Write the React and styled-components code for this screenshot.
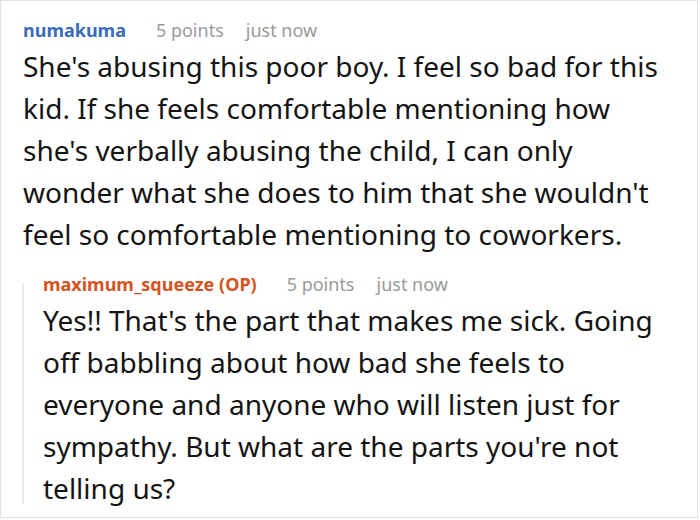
import React from 'react';
import styled, { createGlobalStyle } from 'styled-components';

const GlobalStyle = createGlobalStyle`
  html, body {
    margin: 0;
    padding: 0;
    background: #ffffff;
  }
  * {
    box-sizing: border-box;
  }
`;

const Frame = styled.div`
  width: 698px;
  height: 518px;
  border: 1px solid #e2e2e2;
  background: #fff;
  overflow: hidden;
  padding: 16px 17px 0 22px;
  font-family: "Noto Sans", "Open Sans", sans-serif;
`;

const Comment = styled.div`
  display: flex;
  flex-direction: column;
`;

const Reply = styled.div`
  display: flex;
  margin-top: 16px;
  gap: 19px;
`;

const Rail = styled.div`
  flex: none;
  width: 2px;
  margin: 12px 0 5px -1px;
  background: #ebebeb;
`;

const ReplyContent = styled.div`
  flex: 1;
  min-width: 0;
`;

const Meta = styled.div`
  display: flex;
  align-items: baseline;
  gap: 30px;
  font-size: 18px;
  line-height: 26px;
`;

const Author = styled.span`
  font-weight: 700;
  color: ${p => (p.$op ? '#d6531d' : '#3a6cba')};
`;

const Muted = styled.span`
  color: #9a9a9a;
  margin-left: ${p => (p.$tight ? '-8px' : '0')};
`;

const Body = styled.p`
  margin: 2px 0 0;
  font-size: 28px;
  line-height: 42px;
  color: #141414;
`;

const comments = {
  parent: {
    author: 'numakuma',
    points: '5 points',
    time: 'just now',
    text: "She's abusing this poor boy. I feel so bad for this kid. If she feels comfortable mentioning how she's verbally abusing the child, I can only wonder what she does to him that she wouldn't feel so comfortable mentioning to coworkers.",
  },
  reply: {
    author: 'maximum_squeeze (OP)',
    points: '5 points',
    time: 'just now',
    text: "Yes!! That's the part that makes me sick. Going off babbling about how bad she feels to everyone and anyone who will listen just for sympathy. But what are the parts you're not telling us?",
  },
};

function Header({ c, op }) {
  return (
    <Meta>
      <Author $op={op}>{c.author}</Author>
      <Muted>{c.points}</Muted>
      <Muted $tight>{c.time}</Muted>
    </Meta>
  );
}

export default function App() {
  const { parent, reply } = comments;
  return (
    <>
      <GlobalStyle />
      <Frame>
        <Comment>
          <Header c={parent} />
          <Body>{parent.text}</Body>
          <Reply>
            <Rail />
            <ReplyContent>
              <Header c={reply} op />
              <Body>{reply.text}</Body>
            </ReplyContent>
          </Reply>
        </Comment>
      </Frame>
    </>
  );
}
